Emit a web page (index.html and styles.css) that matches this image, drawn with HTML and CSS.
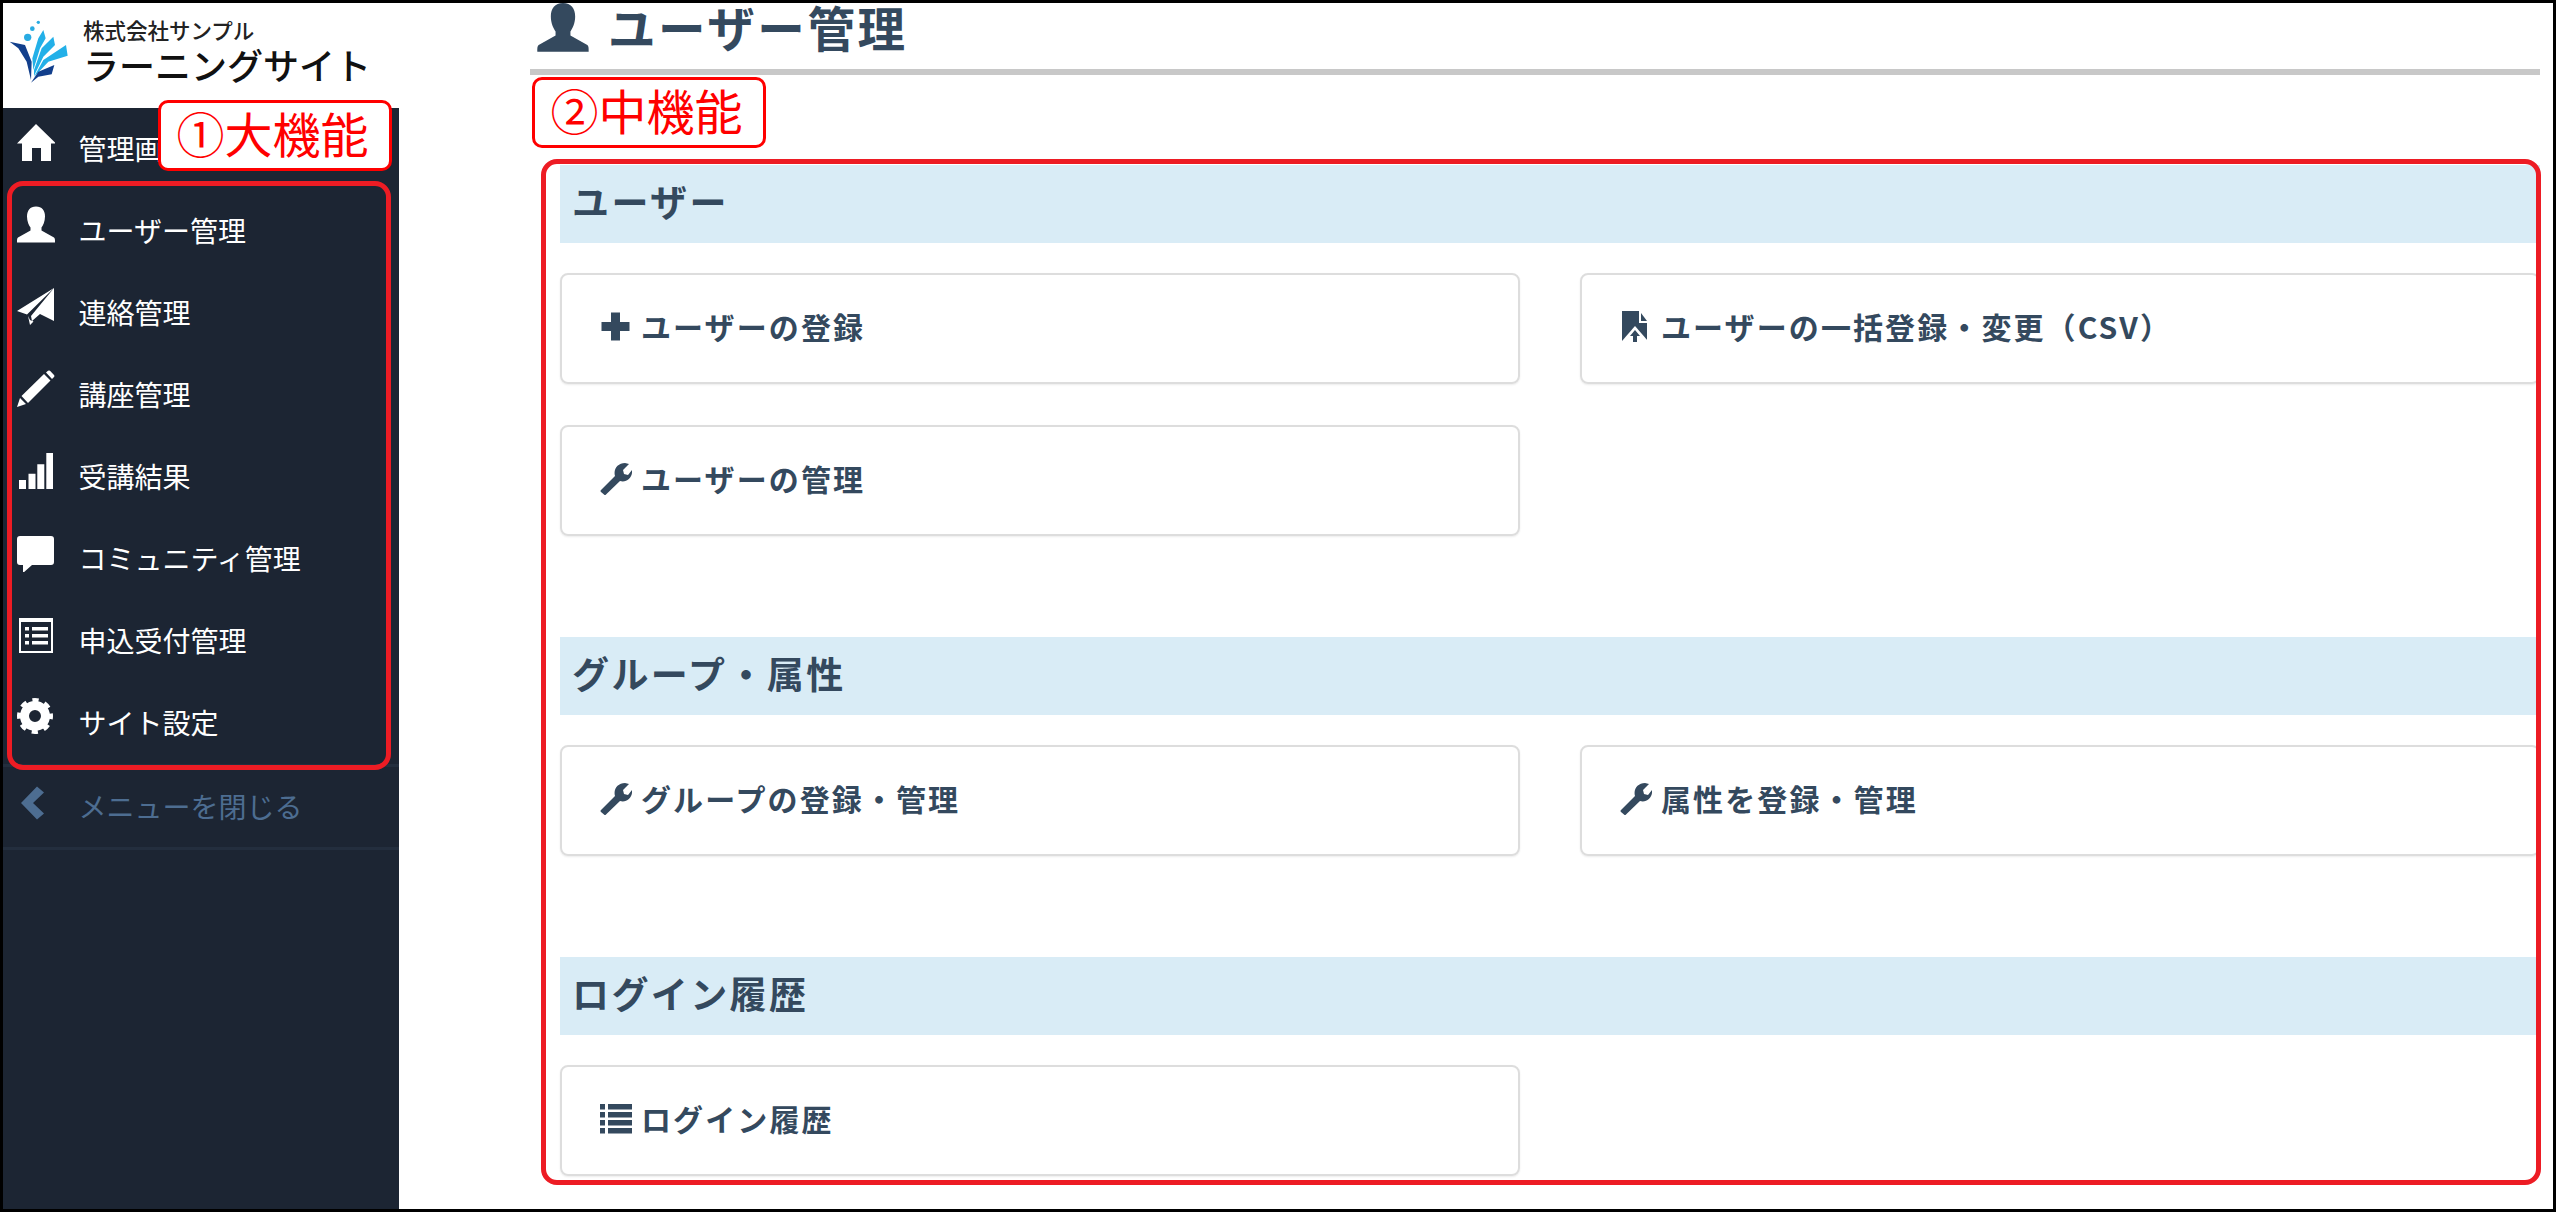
FILE: index.html
```html
<!DOCTYPE html>
<html lang="ja">
<head>
<meta charset="utf-8">
<title>ユーザー管理</title>
<link rel="stylesheet" href="styles.css">
</head>
<body>
<svg class="defs" width="0" height="0" aria-hidden="true">
  <symbol id="i-user" viewBox="0 0 38 37"><path d="M19 0C25 0 28 4 28 10C28 15 26 19 24.500 21L24.500 24L37 31C38 32 38 33 38 36L0 36C0 33 0 32 1 31L13.500 24L13.500 21C12 19 10 15 10 10C10 4 13 0 19 0Z"/></symbol>
  <symbol id="i-wrench" viewBox="0 0 32 32"><path d="M1 27L15 13C13 6 18 0 25 0L29 1L23 7L24 11L28 12L32 7C33 14 27 20 20 18L6 31.500Q5 32.500 4 31.500L1 29Q0 28 1 27Z"/></symbol>
</svg>
<div class="frame">
  <aside class="sidebar">
    <div class="brand">
      <svg class="brand-mark" viewBox="0 0 210 225">
        <circle cx="68" cy="67" r="11" fill="#29abe2"/>
        <circle cx="82" cy="41" r="7" fill="#29abe2"/>
        <circle cx="100" cy="22" r="5" fill="#29abe2"/>
        <path fill="#123f8c" d="M14 80L60 90L80 140L78 195L65 140L40 100Z"/>
        <path fill="#23b0e8" d="M82 130L100 70L115 45L122 70L105 100L85 165Z"/>
        <path fill="#23b0e8" d="M87 165L110 100L145 65L150 90L115 125L87 183Z"/>
        <path fill="#23b0e8" d="M87 186L115 135L183 90L188 122L130 140Z"/>
        <path fill="#123f8c" d="M78 203L100 170L148 150L140 178L100 185Z"/>
      </svg>
      <div class="brand-text">
        <div class="brand-company">株式会社サンプル</div>
        <div class="brand-site">ラーニングサイト</div>
      </div>
    </div>
    <nav>
      <a class="nav-item">
        <svg class="nav-icon" viewBox="0 0 38 38"><path d="M19 0L39 19.500H34V37H24V24H15V37H5V19.500H0Z"/></svg>
        <span class="nav-label">管理画面</span>
      </a>
      <a class="nav-item">
        <svg class="nav-icon"><use href="#i-user"/></svg>
        <span class="nav-label">ユーザー管理</span>
      </a>
      <a class="nav-item">
        <svg class="nav-icon" viewBox="0 0 38 38"><path d="M37 0L0 23L10 26.500ZM37 0L14 28L15 33L23 26L37 33ZM11 28L13 37L16.500 33.500L13 32Z"/></svg>
        <span class="nav-label">連絡管理</span>
      </a>
      <a class="nav-item">
        <svg class="nav-icon" viewBox="0 0 38 38"><path d="M0 37L3 28L9 34ZM4.500 26L27 4L33.500 10.500L11 33ZM29 2.500L31 .800Q32 0 33 .800L37 5Q38 6 37 7L35 9Z"/></svg>
        <span class="nav-label">講座管理</span>
      </a>
      <a class="nav-item">
        <svg class="nav-icon" viewBox="0 -1 38 38"><path d="M2 27H9V36H2ZM11.500 20.700H18.500V36H11.500ZM20.300 11.300H27.300V36H20.300ZM29.300 0H36V36H29.300Z"/></svg>
        <span class="nav-label">受講結果</span>
      </a>
      <a class="nav-item">
        <svg class="nav-icon" viewBox="0 -2 38 38"><path d="M3 0H34Q37 0 37 3V26Q37 29 34 29H15L6 37V29H3Q0 29 0 26V3Q0 0 3 0Z"/></svg>
        <span class="nav-label">コミュニティ管理</span>
      </a>
      <a class="nav-item">
        <svg class="nav-icon" viewBox="0 -2 38 38"><path fill-rule="evenodd" d="M2 0H36V35H2ZM4 4V33H34V4ZM8 9H12V12.500H8ZM15 9H31V12.500H15ZM8 16H12V19.500H8ZM15 16H31V19.500H15ZM8 23H12V26.500H8ZM15 23H31V26.500H15Z"/></svg>
        <span class="nav-label">申込受付管理</span>
      </a>
      <a class="nav-item">
        <svg class="nav-icon" viewBox="0 0 38 38">
          <circle class="cog-ring" cx="18" cy="18" r="10.500"/>
          <circle class="cog-teeth" cx="18" cy="18" r="15.500"/>
        </svg>
        <span class="nav-label">サイト設定</span>
      </a>
      <a class="nav-item nav-close">
        <svg class="nav-icon" viewBox="0 -4.500 38 38"><path d="M20 0L27 6L16 16.500L27 27L20 33L4 16.500Z"/></svg>
        <span class="nav-label">メニューを閉じる</span>
      </a>
    </nav>
  </aside>

  <main class="main">
    <h1 class="page-title">
      <svg class="title-icon"><use href="#i-user"/></svg>
      <span class="title-text">ユーザー管理</span>
    </h1>
    <div class="sections">
      <section class="section">
        <h2 class="section-head">ユーザー</h2>
        <div class="cards">
          <a class="card">
            <svg class="card-icon" viewBox="0 0 32 32"><path d="M11 1.500H20V11H29.500V20H20V29.500H11V20H1.500V11H11Z"/></svg>
            <span class="card-label">ユーザーの登録</span>
          </a>
          <a class="card">
            <svg class="card-icon" viewBox="0 0 32 32">
              <path d="M2 0H19V12H27V30H2ZM21 2L27 10H21Z"/>
              <path class="cut" d="M2 30L15 15L28 30Z"/>
              <path d="M15 19L20 25H17V31H13V25H10Z"/>
            </svg>
            <span class="card-label">ユーザーの一括登録・変更（CSV）</span>
          </a>
          <a class="card">
            <svg class="card-icon"><use href="#i-wrench"/></svg>
            <span class="card-label">ユーザーの管理</span>
          </a>
        </div>
      </section>
      <section class="section">
        <h2 class="section-head">グループ・属性</h2>
        <div class="cards">
          <a class="card">
            <svg class="card-icon"><use href="#i-wrench"/></svg>
            <span class="card-label">グループの登録・管理</span>
          </a>
          <a class="card">
            <svg class="card-icon"><use href="#i-wrench"/></svg>
            <span class="card-label">属性を登録・管理</span>
          </a>
        </div>
      </section>
      <section class="section">
        <h2 class="section-head">ログイン履歴</h2>
        <div class="cards">
          <a class="card">
            <svg class="card-icon" viewBox="0 0 32 32"><path d="M0 1H5V6.500H0ZM8 1H32V6.500H8ZM0 9H5V14.500H0ZM8 9H32V14.500H8ZM0 17H5V22.500H0ZM8 17H32V22.500H8ZM0 25H5V30.500H0ZM8 25H32V30.500H8Z"/></svg>
            <span class="card-label">ログイン履歴</span>
          </a>
        </div>
      </section>
    </div>
  </main>

  <div class="callout-frame callout-frame-side"></div>
  <div class="callout-frame callout-frame-main"></div>
  <div class="callout-label callout-label-side">①大機能</div>
  <div class="callout-label callout-label-main">②中機能</div>
</div>
</body>
</html>
```

FILE: styles.css
```css
* { box-sizing: border-box; }
html, body { margin: 0; padding: 0; background: #fff; }
body {
  width: 2556px;
  height: 1212px;
  overflow: hidden;
  font-family: "Noto Sans CJK JP", "Noto Sans", sans-serif;
}
.defs { position: absolute; }
svg { fill: currentColor; display: block; }

.frame {
  position: relative;
  display: flex;
  width: 2556px;
  height: 1212px;
  border: 3px solid #000;
  background: #fff;
  overflow: hidden;
}

/* Sidebar */
.sidebar {
  flex: 0 0 396px;
  display: flex;
  flex-direction: column;
  background: #1c2533;
}
.brand {
  display: flex;
  height: 105px;
  padding: 12px 0 0 2px;
  gap: 8px;
  background: #fff;
}
.brand-mark { width: 70px; height: 75px; flex: none; }
.brand-text { display: flex; flex-direction: column; padding-top: 2px; }
.brand-company { font-size: 21.5px; line-height: 26px; font-weight: 500; color: #222; }
.brand-site { font-size: 36px; line-height: 42px; font-weight: 500; color: #111; }

.nav-item {
  display: flex;
  align-items: center;
  height: 82px;
  padding-left: 14px;
  gap: 24px;
  color: #fff;
  font-size: 28px;
  line-height: 40px;
}
.nav-icon { width: 38px; height: 38px; margin-bottom: 12px; flex: none; }
.nav-label { padding-bottom: 3px; margin-left: -.5px; }
.cog-ring { fill: none; stroke: currentColor; stroke-width: 9px; }
.cog-teeth { fill: none; stroke: currentColor; stroke-width: 5px; stroke-dasharray: 6.1 6.07; stroke-dashoffset: 3; }
.nav-close {
  height: 86px;
  color: #4d6d91;
  border-top: 3px solid #232e3e;
  border-bottom: 3px solid #232e3e;
}

/* Main */
.main {
  flex: 1;
  min-width: 0;
  padding: 0 13px 0 131px;
  color: #34495e;
}
.page-title {
  display: flex;
  align-items: center;
  height: 72px;
  margin: 0;
  padding: 0 0 16px 7px;
  gap: 19px;
  border-bottom: 6px solid #c8c8c8;
  font-size: 47.5px;
  line-height: 58px;
  font-weight: 700;
  letter-spacing: 2.6px;
}
.title-icon { width: 52px; height: 50px; flex: none; }
.title-text { padding-bottom: 2px; }
.sections {
  padding: 90px 0 0 30px;
  display: flex;
  flex-direction: column;
  gap: 101px;
}
.section-head {
  height: 78px;
  margin: 0;
  padding: 0 12px;
  background: #d9ecf6;
  font-size: 37px;
  line-height: 72px;
  font-weight: 700;
  letter-spacing: 2.4px;
}
.cards {
  display: grid;
  grid-template-columns: 960px 960px;
  column-gap: 60px;
  row-gap: 41px;
  margin-top: 30px;
}
.card {
  display: flex;
  align-items: center;
  height: 111px;
  padding-left: 38px;
  gap: 9px;
  border: 2px solid #ddd;
  border-radius: 8px;
  box-shadow: 0 1px 2px rgba(0, 0, 0, .08);
  font-size: 30px;
  line-height: 40px;
  font-weight: 700;
  letter-spacing: 2.1px;
}
.card-icon { width: 32px; height: 32px; flex: none; margin-bottom: 4px; }
.card-label { padding-bottom: 6px; }
.cut { fill: #fff; }

/* Annotation overlays */
.callout-frame {
  position: absolute;
  border: 5px solid #ed1c24;
  border-radius: 16px;
}
.callout-frame-side { left: 4px; top: 178px; width: 384px; height: 589px; }
.callout-frame-main { left: 538px; top: 156px; width: 2000px; height: 1026px; }
.callout-label {
  position: absolute;
  width: 234px;
  height: 71px;
  border: 3px solid #f00;
  border-radius: 10px;
  background: #fff;
  color: #f00;
  font-size: 48px;
  line-height: 58px;
  text-align: center;
  padding-right: 5px;
}
.callout-label-side { left: 155px; top: 97px; }
.callout-label-main { left: 529px; top: 74px; }
```
